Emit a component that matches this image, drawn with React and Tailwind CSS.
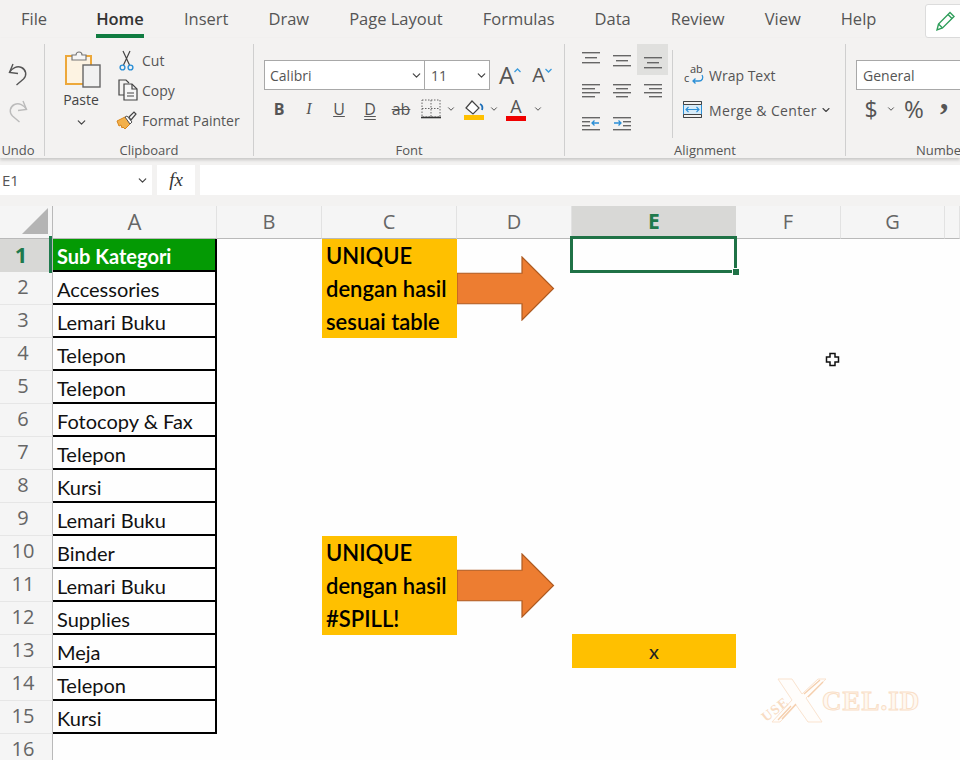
import React from "react";
import { ChevronDown } from "lucide-react";

const tabs = ["Insert", "Draw", "Page Layout", "Formulas", "Data", "Review", "View", "Help"];
const rows = ["Accessories", "Lemari Buku", "Telepon", "Telepon", "Fotocopy & Fax", "Telepon", "Kursi", "Lemari Buku", "Binder", "Lemari Buku", "Supplies", "Meja", "Telepon", "Kursi"];

function Chevron({ size = 13 }) {
  return <ChevronDown size={size} strokeWidth={2.2} className="text-[#444]" />;
}

function Group({ width, label, children }) {
  return (
    <div className={`${width} mt-[6px] h-[112px] shrink-0 flex flex-col border-r border-[#cfcfcf]`}>
      <div className="h-[98px] flex overflow-hidden">{children}</div>
      <div className="h-[14px] pt-[3px] flex items-center justify-center whitespace-nowrap text-[13px] text-[#555]">{label}</div>
    </div>
  );
}

function Lines({ lines, extra }) {
  return (
    <svg width="20" height="20" viewBox="0 0 20 20">
      {lines.map(([y, x1, x2], i) => (
        <rect key={i} x={x1} y={y} width={x2 - x1} height="1.4" fill="#666" />
      ))}
      {extra}
    </svg>
  );
}

function UndoIcon({ color, flip }) {
  return (
    <svg width="20" height="23" viewBox="0 0 20 23" fill="none" stroke={color} strokeWidth="1.4" className={flip ? "-scale-x-100" : ""}>
      <path d="M5 1L1.500 9.500l8.500 1" />
      <path d="M1.500 9.500C4 5 9 2.500 13.500 4.500c5 2.500 5.500 8 2 11.500L8.500 22" />
    </svg>
  );
}

function ScissorsIcon() {
  return (
    <svg width="15" height="21" viewBox="0 0 15 21" fill="none">
      <path d="M4.500 15L11 1M10.500 15L4 1" stroke="#444" strokeWidth="1.2" />
      <circle cx="3.500" cy="17.500" r="2.400" stroke="#2b8fd6" strokeWidth="1.4" />
      <circle cx="11.500" cy="17.500" r="2.400" stroke="#2b8fd6" strokeWidth="1.4" />
    </svg>
  );
}

function PasteIcon() {
  return (
    <svg width="36" height="38" viewBox="0 0 36 38">
      <rect x="1" y="6" width="25" height="28" fill="#fdf3e2" stroke="#eda83a" strokeWidth="2" />
      <path d="M7 10V5h4a3 3 0 0 1 6 0h4v5z" fill="#f6f6f6" stroke="#777" strokeWidth="1.2" />
      <rect x="18" y="15" width="17" height="22" fill="#f1f1f1" stroke="#666" strokeWidth="1.4" />
    </svg>
  );
}

function CopyIcon() {
  return (
    <svg width="22" height="22" viewBox="0 0 22 22" fill="none" stroke="#444" strokeWidth="1.2">
      <path d="M7 16H1V1h7l3 3" />
      <path d="M6 5h8l5 5v11H6z" fill="#f6f6f6" />
      <path d="M14 5v5h5M9 14h7M9 17h7" />
    </svg>
  );
}

function PainterIcon() {
  return (
    <svg width="22" height="20" viewBox="0 0 22 20">
      <path d="M1 11l8-4 5 7-5 5-2-2-1 1-1-3-2 1z" fill="#f2b04a" stroke="#d8861c" strokeWidth="1" />
      <path d="M9 7l5 7 2-2-5-6z" fill="#fff" stroke="#555" strokeWidth="1" />
      <path d="M13 7l5-5 2 2-5 6z" fill="#f6f6f6" stroke="#444" strokeWidth="1.2" />
    </svg>
  );
}

function BorderIcon() {
  return (
    <svg width="20" height="20" viewBox="0 0 20 20" fill="none">
      <path d="M1 1h18v17H1zM10 1v17M1 9.500h18" stroke="#666" strokeWidth="1" strokeDasharray="1.500 1.500" />
      <path d="M0 18.500h20" stroke="#333" strokeWidth="1.600" />
    </svg>
  );
}

function FillIcon() {
  return (
    <svg width="22" height="22" viewBox="0 0 22 22">
      <path d="M3 10l6-7 7 7-6 6z" fill="#fff" stroke="#444" strokeWidth="1.2" />
      <path d="M17 6c2 1 3 3 2 6" fill="none" stroke="#1d6fb8" strokeWidth="1.8" />
      <rect x="1" y="17" width="20" height="5" fill="#ffc000" />
    </svg>
  );
}

function FontColorIcon() {
  return (
    <div className="w-[20px] h-[24px] flex flex-col items-center">
      <span className="h-[18px] text-[18px] leading-[18px] text-[#555]">A</span>
      <span className="mt-[1px] h-[5px] w-[20px] bg-[#f00000]" />
    </div>
  );
}

function WrapIcon() {
  return (
    <svg width="20" height="20" viewBox="0 0 20 20" fill="none" className="overflow-visible">
      <text x="5" y="8" fontSize="11" fill="#444" fontFamily="Open Sans, sans-serif">ab</text>
      <text x="-1" y="17" fontSize="11" fill="#444" fontFamily="Open Sans, sans-serif">c</text>
      <path d="M17 10c2 3 0 6-3 6H8m2.500-2.500L8 16l2.500 2.500" stroke="#2b8fd6" strokeWidth="1.3" />
    </svg>
  );
}

function MergeIcon() {
  return (
    <svg width="20" height="20" viewBox="0 0 20 20" fill="none">
      <rect x="0.500" y="1.500" width="18" height="16" fill="#d8ecf9" stroke="#2b8fd6" />
      <path d="M0.500 1.500h18v3h-18zM0.500 14.500h18v3h-18z" fill="#f3f2f1" stroke="#444" />
      <path d="M3 9.500h13M5.500 7L3 9.500 5.500 12M13.500 7l2.500 2.500-2.500 2.500" stroke="#2b8fd6" strokeWidth="1.1" />
    </svg>
  );
}

function IndentArrow({ flip }) {
  return (
    <path d={flip ? "M18 11h-7m2.500-2.500L11 11l2.500 2.500" : "M2 11h7M6.500 8.500L9 11l-2.500 2.500"} fill="none" stroke="#2b8fd6" strokeWidth="1.3" />
  );
}

function Caret({ down }) {
  return (
    <svg width="7" height="5" viewBox="0 0 7 5" fill="none" stroke="#3b9bdc" strokeWidth="1.3" className="shrink-0">
      <path d={down ? "M0.500 1l3 3 3-3" : "M0.500 4l3-3 3 3"} />
    </svg>
  );
}

function Ribbon() {
  return (
    <div className="h-[120px] flex bg-[#f3f2f1] shadow-[0_2px_3px_rgba(0,0,0,0.18)] relative overflow-hidden">
      <Group width="w-[45px]" label={<span className="pr-[8px]">Undo</span>}>
        <div className="w-[36px] pt-[19px] flex flex-col items-center gap-[14px]">
          <UndoIcon color="#555" />
          <UndoIcon color="#bbb" flip />
        </div>
      </Group>

      <Group width="w-[209px]" label="Clipboard">
        <div className="ml-[20px] w-[36px] pt-[6px] flex flex-col items-center">
          <PasteIcon />
          <span className="mt-[2px] pr-[4px] text-[14px] leading-[20px] text-[#444]">Paste</span>
          <span className="mt-[6px] pr-[4px]"><Chevron /></span>
        </div>
        <div className="ml-[17px] pt-[1px] text-[14px] text-[#555] whitespace-nowrap">
          <div className="h-[30px] flex items-center">
            <span className="w-[24px] pl-[1px]"><ScissorsIcon /></span>Cut
          </div>
          <div className="h-[30px] flex items-center">
            <span className="w-[24px]"><CopyIcon /></span>Copy
          </div>
          <div className="h-[30px] flex items-center">
            <span className="w-[24px] -ml-[2px] mr-[2px]"><PainterIcon /></span>Format Painter
          </div>
        </div>
      </Group>

      <Group width="w-[311px]" label="Font">
        <div className="pl-[10px] pt-[16px] flex flex-col">
          <div className="h-[30px] flex items-center">
            <div className="w-[161px] h-[30px] bg-white border border-[#a8a8a8] flex items-center justify-between pl-[5px] pr-[1px] text-[14px] text-[#555]">
              Calibri <Chevron />
            </div>
            <div className="w-[66px] h-[30px] -ml-[1px] bg-white border border-[#a8a8a8] flex items-center justify-between pl-[6px] pr-[1px] text-[14px] text-[#555]">
              11 <Chevron />
            </div>
            <span className="ml-[9px] flex items-start text-[24px] leading-[28px] text-[#555]">A<span className="mt-[7px]"><Caret /></span></span>
            <span className="ml-[11px] flex items-start text-[20px] leading-[26px] text-[#555]">A<span className="mt-[6px]"><Caret down /></span></span>
          </div>
          <div className="mt-[6px] h-[26px] flex items-center text-[#555]">
            <span className="w-[30px] text-center text-[16px] font-bold">B</span>
            <span className="w-[30px] text-center text-[16px] italic font-[Liberation_Serif]">I</span>
            <span className="w-[30px] text-center text-[16px] underline">U</span>
            <span className="w-[32px] text-center text-[16px] underline decoration-double">D</span>
            <span className="w-[30px] text-center text-[16px] line-through">ab</span>
            <span className="w-[30px] flex justify-center"><BorderIcon /></span>
            <span className="w-[10px] flex justify-center"><Chevron size={12} /></span>
            <span className="w-[33px] flex justify-center pl-[2px]"><FillIcon /></span>
            <span className="w-[10px] flex justify-center"><Chevron size={12} /></span>
            <span className="w-[34px] flex justify-center"><FontColorIcon /></span>
            <span className="w-[10px] flex justify-center"><Chevron size={12} /></span>
          </div>
        </div>
      </Group>

      <Group width="w-[281px]" label="Alignment">
        <div className="ml-[10px] w-[93px] grid grid-cols-[31px_31px_31px] grid-rows-[31px_31px_31px] place-items-center">
          <Lines lines={[[2, 1, 19], [7, 4, 16], [12, 1, 19]]} />
          <Lines lines={[[5, 1, 19], [10, 4, 16], [15, 1, 19]]} />
          <div className="w-[31px] h-[31px] bg-[#e0e0de] flex items-center justify-center">
            <Lines lines={[[7, 1, 19], [12, 4, 16], [17, 1, 19]]} />
          </div>
          <Lines lines={[[3, 1, 19], [7, 1, 14], [11, 1, 19], [15, 1, 14]]} />
          <Lines lines={[[3, 1, 19], [7, 4, 16], [11, 1, 19], [15, 4, 16]]} />
          <Lines lines={[[3, 1, 19], [7, 6, 19], [11, 1, 19], [15, 6, 19]]} />
          <Lines lines={[[5, 1, 19], [9, 1, 9], [13, 1, 9], [17, 1, 19]]} extra={<IndentArrow flip />} />
          <Lines lines={[[5, 1, 19], [9, 11, 19], [13, 11, 19], [17, 1, 19]]} extra={<IndentArrow />} />
        </div>
        <div className="ml-[4px] mt-[6px] mb-[4px] w-[1px] bg-[#cfcfcf]" />
        <div className="pl-[10px] pt-[16px] text-[14px] text-[#555] whitespace-nowrap">
          <div className="h-[30px] flex items-center">
            <span className="w-[26px] pl-[2px]"><WrapIcon /></span>Wrap Text
          </div>
          <div className="mt-[5px] h-[30px] flex items-center">
            <span className="w-[26px]"><MergeIcon /></span>
            <span className="tracking-[0.35px]">Merge &amp; Center</span>
            <span className="ml-[3px]"><Chevron size={12} /></span>
          </div>
        </div>
      </Group>

      <div className="mt-[6px] h-[112px] flex-1 flex flex-col overflow-hidden">
        <div className="h-[98px] pl-[10px] pt-[16px]">
          <div className="w-[130px] h-[30px] bg-white border border-[#a8a8a8] flex items-center pl-[6px] text-[14px] text-[#555]">General</div>
          <div className="mt-[6px] h-[26px] flex items-center text-[#555] whitespace-nowrap">
            <span className="w-[30px] text-center text-[23px]">$</span>
            <span className="w-[10px] flex justify-center"><Chevron size={12} /></span>
            <span className="w-[36px] text-center text-[24px]">%</span>
            <span className="w-[24px] h-[26px] text-center text-[34px] leading-[38px] font-bold font-[Liberation_Serif]">’</span>
          </div>
        </div>
        <div className="h-[14px] pl-[70px] pt-[3px] flex items-center text-[13px] text-[#555]">Number</div>
      </div>
    </div>
  );
}

function Logo() {
  return (
    <div className="absolute left-[760px] top-[678px] w-[162px] h-[46px] flex items-center select-none">
      <svg width="66" height="46" viewBox="0 0 66 46" className="shrink-0">
        <path d="M18 1h14l10 15L58 1h8L46 20l16 24H48L36 27 20 44h-8l20-22z" fill="#fffdfb" stroke="#fae3cf" strokeWidth="1" />
        <path d="M44 16L60 2M48 19L63 4M22 41l14-15M18 42l13-14" stroke="#f5cfae" strokeWidth="1.3" />
      </svg>
      <span className="absolute left-[0px] top-[21px] rotate-[-38deg] font-[Liberation_Serif] font-bold text-[14px] tracking-[1px] text-[#f8dcc3]">USE</span>
      <span className="-ml-[4px] font-[Liberation_Serif] font-bold text-[27px] tracking-[1px] text-[#fff8f1] [-webkit-text-stroke:1px_#f9dfc8]">CEL.ID</span>
    </div>
  );
}

function Arrow() {
  return (
    <svg width="98" height="65" viewBox="0 0 98 66" preserveAspectRatio="none">
      <path d="M0 17.500h65V1l31.500 32L65 65V48.500H0z" fill="#ed7d31" stroke="#ae5a21" strokeWidth="1.2" />
    </svg>
  );
}

function NoteCell({ className, lines }) {
  return (
    <div className={`${className} bg-[#ffc000] pl-[4px] text-[22px] leading-[33px] font-semibold text-black whitespace-nowrap`}>
      {lines.map((t) => <div key={t}>{t}</div>)}
    </div>
  );
}

function Sheet() {
  const colHeads = ["B", "C", "D", "E", "F", "G", ""];
  return (
    <div className="grid grid-cols-[53px_164px_105px_135px_115px_164px_105px_104px_15px] grid-rows-[33px_repeat(16,33px)] bg-[#fefefe] font-[Lato,sans-serif]">
      {/* corner + column headers */}
      <div className="bg-[#f5f5f5] border-b border-r border-[#b9b9b9] flex items-end justify-end pr-[4px] pb-[4px]">
        <svg width="26" height="26" viewBox="0 0 26 26"><path d="M26 0v26H0z" fill="#b4b4b4" /></svg>
      </div>
      <div className="bg-[#f5f5f5] border-b border-r border-b-[#b9b9b9] border-r-[#e2e2e2] pb-[1px] flex items-center justify-center text-[22px] text-[#666] font-[Open_Sans,sans-serif]">A</div>
      {colHeads.map((c, i) => (
        <div
          key={i}
          className={c === "E"
            ? "bg-[#d8d8d6] border-b border-[#b9b9b9] pb-[1px] flex items-center justify-center text-[21px] font-bold text-[#1f7a4d] font-[Open_Sans,sans-serif]"
            : "bg-[#f5f5f5] border-b border-r border-b-[#b9b9b9] border-r-[#e2e2e2] pb-[1px] flex items-center justify-center text-[20px] text-[#666] font-[Open_Sans,sans-serif]"}
        >
          {c}
        </div>
      ))}

      {/* row headers */}
      {Array.from({ length: 16 }, (_, i) => (
        <div
          key={i}
          style={{ gridRow: i + 2 }}
          className={i === 0
            ? "col-start-1 relative bg-[#d8d8d6] border-r border-[#b9b9b9] pb-[2px] flex items-center justify-center pr-[10px] text-[22px] font-bold text-[#1f7a4d] font-[Open_Sans,sans-serif]"
            : "col-start-1 bg-[#f5f5f5] border-r border-b border-r-[#b9b9b9] border-b-[#e6e6e6] pb-[2px] flex items-center justify-center pr-[6px] text-[20px] text-[#666] font-[Open_Sans,sans-serif]"}
        >
          {i + 1}
          {i === 0 && <span className="absolute right-0 -top-[3px] -bottom-[1px] w-[3px] bg-[#1f7a4d]" />}
        </div>
      ))}

      {/* column A table */}
      <div className="col-start-2 row-start-2 bg-[#049a04] border-b-2 border-r-2 border-black pl-[4px] pt-[3px] flex items-center text-[20px] font-bold text-white whitespace-nowrap">Sub Kategori</div>
      {rows.map((r, i) => (
        <div
          key={i}
          style={{ gridRow: i + 3 }}
          className="col-start-2 border-b-2 border-r-2 border-black pl-[4px] pt-[3px] flex items-center text-[20px] text-[#111] whitespace-nowrap"
        >
          {r}
        </div>
      ))}

      <NoteCell className="col-start-4 row-start-2 row-span-3" lines={["UNIQUE", "dengan hasil", "sesuai table"]} />
      <div className="col-start-5 row-start-2 row-span-3 flex items-center"><Arrow /></div>

      <div className="col-start-6 row-start-2 relative">
        <div className="absolute -left-[2px] -right-[1px] -top-[3px] -bottom-[1px] border-[3px] border-[#1f7246]" />
        <div className="absolute -right-[4px] -bottom-[4px] w-[8px] h-[8px] bg-[#1f7246] border border-white" />
      </div>

      <NoteCell className="col-start-4 row-start-11 row-span-3" lines={["UNIQUE", "dengan hasil", "#SPILL!"]} />
      <div className="col-start-5 row-start-11 row-span-3 flex items-center"><Arrow /></div>

      <div className="col-start-6 row-start-14 -mt-[1px] bg-[#ffc000] flex items-center justify-center text-[20px] text-[#222]">x</div>
    </div>
  );
}

export default function App() {
  return (
    <div className="relative w-[960px] h-[760px] overflow-hidden bg-[#f3f2f1] font-[Open_Sans,sans-serif]">
      {/* tabs */}
      <div className="h-[38px] flex items-start pl-[21px] text-[16.5px] text-[#555] whitespace-nowrap">
        <span className="mt-[7px] w-[75px]">File</span>
        <span className="mt-[7px] h-[31px] w-[48px] mr-[40px] border-b-[4px] border-[#107c41] font-semibold text-[#333] text-center">Home</span>
        <div className="flex gap-[40px] mt-[7px]">
          {tabs.map((t) => <span key={t}>{t}</span>)}
        </div>
        <div className="absolute left-[925px] top-[4px] w-[50px] h-[34px] bg-white border border-[#dcdcdc] rounded-[3px] pl-[9px] flex items-center">
          <svg width="20" height="22" viewBox="0 0 20 22" fill="none" stroke="#2f9e5b" strokeWidth="1.4">
            <path d="M2 20l1.500-6L15 2.500l4 4L7.500 18z" />
            <path d="M3.500 14l4 4M13 4.500l4 4" />
          </svg>
        </div>
      </div>

      <Ribbon />

      {/* formula bar */}
      <div className="h-[48px] pt-[7px] flex gap-[5px] items-start text-[15px] text-[#555]">
        <div className="w-[152px] h-[30px] bg-white flex items-center justify-between pl-[2px] pr-[3px]">E1 <Chevron /></div>
        <div className="w-[38px] h-[30px] bg-white flex items-center justify-center italic font-[Liberation_Serif] text-[19px] text-[#333]">fx</div>
        <div className="flex-1 h-[30px] bg-white" />
      </div>

      <Sheet />
      <Logo />

      {/* excel cross cursor */}
      <svg className="absolute left-[825px] top-[352px]" width="15" height="15" viewBox="0 0 15 15">
        <path d="M5 1.500h5V5h3.500v5H10v3.500H5V10H1.500V5H5z" fill="#fff" stroke="#111" strokeWidth="1.500" />
      </svg>
    </div>
  );
}
